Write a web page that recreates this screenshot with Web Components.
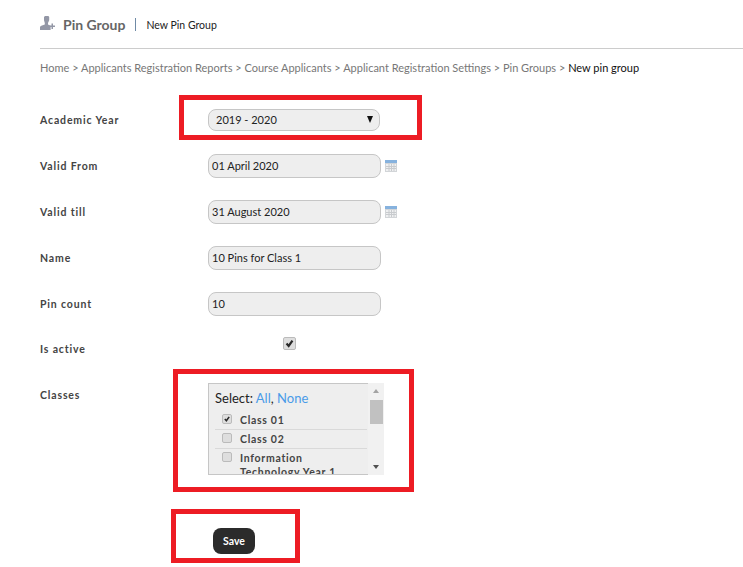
<!DOCTYPE html>
<html>
<head>
<meta charset="utf-8">
<title>Pin Group</title>
<style>
html, body { margin: 0; padding: 0; background: #fff; }
body { position: relative; height: 567px; overflow: hidden; font-family: "Lato", "Liberation Sans", sans-serif; }
</style>
</head>
<body>
<page-head title="Pin Group" sub="New Pin Group"></page-head>
<bread-crumbs current="New pin group">Home &gt; Applicants Registration Reports &gt; Course Applicants &gt; Applicant Registration Settings &gt; Pin Groups &gt; </bread-crumbs>
<form-panel>
  <form-row label="Academic Year"><year-select value="2019 - 2020"></year-select></form-row>
  <form-row label="Valid From"><text-field value="01 April 2020"></text-field><cal-icon></cal-icon></form-row>
  <form-row label="Valid till"><text-field value="31 August 2020"></text-field><cal-icon></cal-icon></form-row>
  <form-row label="Name"><text-field value="10 Pins for Class 1"></text-field></form-row>
  <form-row label="Pin count"><text-field value="10"></text-field></form-row>
  <form-row label="Is active" short><check-box checked style="margin-left:75px;margin-top:-12px"></check-box></form-row>
  <form-row label="Classes" top><class-list></class-list></form-row>
  <save-button>Save</save-button>
</form-panel>
<red-mark style="left:179px;top:95px;width:243px;height:45px"></red-mark>
<red-mark style="left:173px;top:369px;width:241px;height:123px"></red-mark>
<red-mark style="left:171px;top:509px;width:129px;height:54px"></red-mark>
<script>
// small helper so every class does not repeat the same shadow setup
class BaseEl extends HTMLElement {
  connectedCallback() {
    if (this.shadowRoot) return;
    const template = document.createElement("template");
    template.innerHTML = this.markup();
    this.attachShadow({ mode: "open" }).appendChild(template.content.cloneNode(true));
  }
}

class PageHead extends BaseEl {
  markup() {
    return `
<style>
:host { display: flex; align-items: center; height: 48px; margin-left: 40px; border-bottom: 1px solid #ccc; box-sizing: content-box; }
svg { width: 16px; height: 16px; margin-top: -3px; margin-right: 7px; }
.title { font-size: 14px; font-weight: 700; color: #666; margin-top: 1px; }
.sep { width: 1px; height: 13px; background: #6f8aa6; margin: 1px 10px 0 10px; }
.sub { font-size: 10.5px; color: #222; margin-top: 1px; }
</style>
<svg viewBox="0 0 16 16"><path fill="#9397a6" d="M5 1h3.4l.8 1v3.2L8 8v1.5l2.6 1.3V15H0v-3.2l1.300-1L4.800 9.500V8L4 5.200V2z"/><path fill="#9397a6" d="M11.500 8.500h1.500v2h2V12h-2v2h-1.500v-2h-2v-1.500h2z"/></svg>
<span class="title">${this.getAttribute("title")}</span><span class="sep"></span><span class="sub">${this.getAttribute("sub")}</span>`;
  }
}

class BreadCrumbs extends BaseEl {
  markup() {
    return `
<style>
:host { display: block; margin: 12px 0 0 40px; font-size: 11px; line-height: 14px; color: #777; white-space: nowrap; }
b { font-weight: 400; color: #111; }
</style>
<slot></slot><b>${this.getAttribute("current")}</b>`;
  }
}

class FormPanel extends BaseEl {
  markup() {
    return `
<style>
:host { display: flex; flex-direction: column; margin: 22px 0 0 40px; }
</style>
<slot></slot>`;
  }
}

class FormRow extends BaseEl {
  markup() {
    return `
<style>
:host { display: grid; grid-template-columns: 168px 1fr; align-items: center; height: 46px; }
:host([short]) { height: 45px; }
:host([top]) { align-items: start; height: 145px; }
:host([top]) .lbl { margin-top: 17px; }
:host([top]) .ctl { margin-top: 11px; }
.lbl { font-size: 10.5px; font-weight: 700; color: #444; letter-spacing: .85px; }
:host([short]) .lbl { margin-top: -1px; }
.ctl { display: flex; align-items: center; gap: 4px; }
</style>
<span class="lbl">${this.getAttribute("label")}</span><div class="ctl"><slot></slot></div>`;
  }
}

class YearSelect extends BaseEl {
  markup() {
    return `
<style>
:host { display: flex; align-items: center; justify-content: space-between; box-sizing: border-box; width: 172px; height: 22px; padding: 0 6px 1px 7px; background: #eee; border: 1px solid #c6c6c6; border-radius: 8px; font-size: 11px; color: #222; }
i { width: 0; height: 0; border: 3.5px solid transparent; border-top: 7px solid #111; border-bottom: 0; }
</style>
<span>${this.getAttribute("value")}</span><i></i>`;
  }
}

class TextField extends BaseEl {
  markup() {
    return `
<style>
:host { display: flex; align-items: center; box-sizing: border-box; width: 173px; height: 23.500px; padding: 0 3px 1px; background: #eee; border: 1px solid #c6c6c6; border-radius: 8px; font-size: 11px; color: #222; }
</style>
<span>${this.getAttribute("value")}</span>`;
  }
}

class CalIcon extends BaseEl {
  markup() {
    return `
<style>
:host { display: block; width: 12px; height: 12px; margin-top: -1px; }
svg { display: block; }
</style>
<svg width="12" height="12" viewBox="0 0 12 12"><rect width="12" height="12" fill="#d2d5d8"/><rect width="12" height="3" fill="#86b2de"/><rect x="1" y="4" width="10" height="7" fill="#eff0f1"/><path stroke="#c8cbce" stroke-width="1" d="M1 6.500h10M1 8.500h10M4 4v7M6.500 4v7M9 4v7"/></svg>`;
  }
}

class CheckBox extends BaseEl {
  markup() {
    const tick = this.hasAttribute("checked") ? `<svg viewBox="0 0 13 13"><path d="M3 6.500l2.500 2.800L10 3" fill="none" stroke="#2a2a2a" stroke-width="2.600"/></svg>` : "";
    return `
<style>
:host { display: block; box-sizing: border-box; width: 13px; height: 13px; flex: none; background: #dedede; border: 1px solid #bbb; border-radius: 2px; }
svg { display: block; width: 100%; height: 100%; }
</style>
${tick}`;
  }
}

class ClassList extends BaseEl {
  markup() {
    return `
<style>
:host { display: flex; width: 176px; height: 92px; }
.box { box-sizing: border-box; width: 160px; height: 92px; overflow: hidden; background: #eee; border: 1px solid #c6c6c6; border-right: 0; padding: 6px 0 0 6px; }
.head { font-size: 13px; line-height: 17px; color: #222; margin-bottom: 4px; }
.head a { color: #4a9be8; }
.item { display: flex; gap: 8px; width: 152px; padding: 2px 0 1px 7px; box-sizing: border-box; border-bottom: 1px solid #d9d9d9; font-size: 10.5px; font-weight: 700; letter-spacing: .7px; line-height: 15px; color: #444; }
.item:last-child { border-bottom: 0; }
.item check-box { margin-top: 1px; width: 10px; height: 10px; }
.item span { max-width: 108px; }
.item:last-child span { line-height: 14px; }
.bar { position: relative; width: 16px; background: #f1f1f1; }
.up, .dn { position: absolute; left: 5px; width: 0; height: 0; border: 3.500px solid transparent; }
.up { top: 6px; border-top: 0; border-bottom: 4px solid #a3a3a3; }
.dn { bottom: 6px; border-bottom: 0; border-top: 4px solid #505050; }
.thumb { position: absolute; left: 2px; top: 17px; width: 13px; height: 24px; background: #c1c1c1; }
</style>
<div class="box">
  <div class="head">Select: <a>All</a>, <a>None</a></div>
  <div class="item"><check-box checked></check-box><span>Class 01</span></div>
  <div class="item"><check-box></check-box><span>Class 02</span></div>
  <div class="item"><check-box></check-box><span>Information Technology Year 1</span></div>
</div>
<div class="bar"><i class="up"></i><i class="thumb"></i><i class="dn"></i></div>`;
  }
}

class SaveButton extends BaseEl {
  markup() {
    return `
<style>
:host { display: flex; align-items: center; justify-content: center; align-self: flex-start; box-sizing: border-box; width: 42px; height: 26px; margin: 11px 0 0 173px; background: #2b2b2b; border-radius: 8px; color: #fff; font-size: 10.500px; font-weight: 700; }
</style>
<slot></slot>`;
  }
}

// annotation frames drawn over the screenshot
class RedMark extends BaseEl {
  markup() {
    return `
<style>
:host { position: absolute; display: block; box-sizing: border-box; border: 5px solid #ed1c24; pointer-events: none; }
</style>`;
  }
}

customElements.define("page-head", PageHead);
customElements.define("bread-crumbs", BreadCrumbs);
customElements.define("form-panel", FormPanel);
customElements.define("form-row", FormRow);
customElements.define("year-select", YearSelect);
customElements.define("text-field", TextField);
customElements.define("cal-icon", CalIcon);
customElements.define("check-box", CheckBox);
customElements.define("class-list", ClassList);
customElements.define("save-button", SaveButton);
customElements.define("red-mark", RedMark);
</script>
</body>
</html>
